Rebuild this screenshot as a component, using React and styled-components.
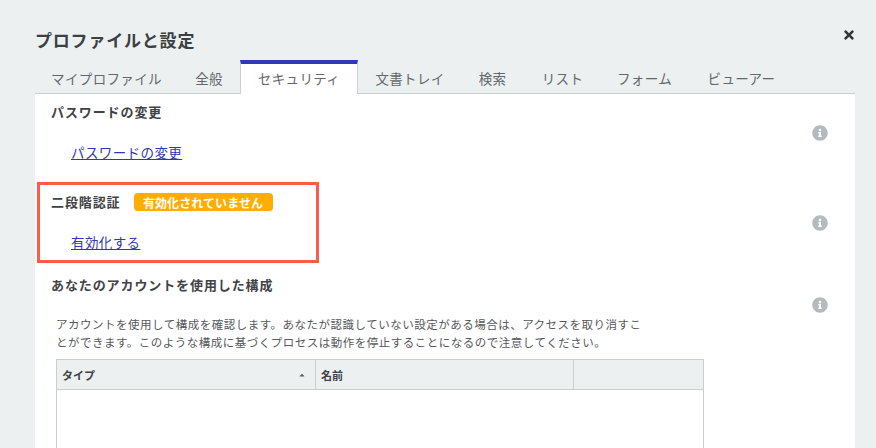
import styled, { createGlobalStyle } from "styled-components";
import { FaInfoCircle, FaTimes, FaCaretUp } from "react-icons/fa";

const Global = createGlobalStyle`
  html, body { margin: 0; padding: 0; background: #ecf0f1; overflow: hidden; }
  * { box-sizing: border-box; }
  body { font-family: "Noto Sans CJK JP", "Noto Sans", sans-serif; }
`;

const Pagina = styled.div`
  width: 876px;
  height: 448px;
  padding: 0 21px 0 35px;
  overflow: hidden;
`;

const Cabecera = styled.header`
  height: 60px;
  display: flex;
  justify-content: space-between;
  padding-top: 27px;
`;

const Titulo = styled.h1`
  margin: 0;
  font-size: 17px;
  line-height: 26px;
  font-weight: 700;
  letter-spacing: 0.8px;
  color: #3c4043;
`;

const Cerrar = styled.button`
  border: 0;
  padding: 0;
  background: none;
  width: 12px;
  height: 16px;
  color: #33383b;
  font-size: 14px;
  display: flex;
  align-items: center;
  justify-content: center;
`;

const Pestanas = styled.nav`
  height: 34px;
  display: flex;
  border-bottom: 1px solid #c9ced1;
`;

const Pestana = styled.div`
  height: ${(p) => (p.$activa ? "34px" : "33px")};
  width: ${(p) => p.$ancho}px;
  flex: none;
  display: flex;
  align-items: center;
  justify-content: center;
  padding-top: ${(p) => (p.$activa ? "0" : "2px")};
  padding-bottom: ${(p) => (p.$activa ? "2px" : "0")};
  margin-bottom: ${(p) => (p.$activa ? "-1px" : "0")};
  font-size: 13.5px;
  letter-spacing: 0.35px;
  color: #63686c;
  background: ${(p) => (p.$activa ? "#fff" : "transparent")};
  border-top: ${(p) => (p.$activa ? "4px solid #3039b3" : "none")};
  border-left: ${(p) => (p.$activa ? "1px solid #c9ced1" : "none")};
  border-right: ${(p) => (p.$activa ? "1px solid #c9ced1" : "none")};
`;

const Panel = styled.main`
  background: #fff;
  height: 360px;
  padding-top: 7px;
`;

const Seccion = styled.section`
  display: flex;
  justify-content: space-between;
  padding: 0 27px 0 16px;
`;

const Cuerpo = styled.div`
  min-width: 0;
`;

const Resaltado = styled.div`
  width: 282px;
  height: 81px;
  margin: 19px 0 0 -14px;
  border: 3px solid #ff5a4d;
  padding: 6px 0 0 11px;
`;

const FilaTitulo = styled.div`
  display: flex;
  align-items: center;
  gap: 13px;
  height: 22px;
`;

const Encabezado = styled.h2`
  margin: ${(p) => p.$arriba || 0}px 0 0;
  font-size: 13px;
  line-height: 22px;
  font-weight: 700;
  letter-spacing: 0.9px;
  color: #3f4346;
`;

const Insignia = styled.span`
  height: 18px;
  width: 139px;
  border-radius: 4px;
  background: #ffae00;
  color: #fff;
  font-size: 12px;
  font-weight: 700;
  letter-spacing: 0.1px;
  display: flex;
  align-items: center;
  justify-content: center;
`;

const Enlace = styled.a`
  display: inline-block;
  margin: 18px 0 0 20px;
  font-size: 13.5px;
  line-height: 22px;
  letter-spacing: 0.4px;
  color: #2f38ad;
  text-decoration: underline;
  cursor: pointer;
`;

const Info = styled.span`
  flex: none;
  margin-top: ${(p) => p.$arriba}px;
  height: 16px;
  color: #b4bbbf;
  font-size: 16px;
  line-height: 0;
`;

const Parrafo = styled.p`
  margin: 19px 0 8px 5px;
  width: 590px;
  font-size: 11.5px;
  line-height: 18px;
  letter-spacing: 0.5px;
  color: #55595c;
`;

const Tabla = styled.div`
  margin-left: 5px;
  width: 648px;
  height: 120px;
  border: 1px solid #c9ced1;
  border-bottom: 0;
`;

const FilaCabecera = styled.div`
  display: grid;
  grid-template-columns: 259px 258px 1fr;
  height: 30px;
  background: #ecf0f1;
  border-bottom: 1px solid #c9ced1;
`;

const Columna = styled.div`
  display: flex;
  align-items: center;
  justify-content: space-between;
  padding: 0 9px 0 5px;
  font-size: 11px;
  font-weight: 700;
  color: #3f4346;
  border-right: ${(p) => (p.$ultima ? "none" : "1px solid #c9ced1")};
`;

const Orden = styled(FaCaretUp)`
  font-size: 8px;
  color: #55595c;
`;

export default function App() {
  return (
    <>
      <Global />
      <Pagina>
        <Cabecera>
          <Titulo>プロファイルと設定</Titulo>
          <Cerrar aria-label="閉じる"><FaTimes /></Cerrar>
        </Cabecera>
        <Pestanas>
          <Pestana $ancho={143}>マイプロファイル</Pestana>
          <Pestana $ancho={62}>全般</Pestana>
          <Pestana $ancho={118} $activa>セキュリティ</Pestana>
          <Pestana $ancho={104}>文書トレイ</Pestana>
          <Pestana $ancho={61}>検索</Pestana>
          <Pestana $ancho={79}>リスト</Pestana>
          <Pestana $ancho={85}>フォーム</Pestana>
          <Pestana $ancho={109}>ビューアー</Pestana>
        </Pestanas>
        <Panel>
          <Seccion>
            <Cuerpo>
              <Encabezado>パスワードの変更</Encabezado>
              <Enlace>パスワードの変更</Enlace>
            </Cuerpo>
            <Info $arriba={24}><FaInfoCircle /></Info>
          </Seccion>
          <Seccion>
            <Resaltado>
              <FilaTitulo>
                <Encabezado>二段階認証</Encabezado>
                <Insignia>有効化されていません</Insignia>
              </FilaTitulo>
              <Enlace>有効化する</Enlace>
            </Resaltado>
            <Info $arriba={52}><FaInfoCircle /></Info>
          </Seccion>
          <Seccion>
            <Cuerpo>
              <Encabezado $arriba={11}>あなたのアカウントを使用した構成</Encabezado>
              <Parrafo>
                アカウントを使用して構成を確認します。あなたが認識していない設定がある場合は、アクセスを取り消すことができます。このような構成に基づくプロセスは動作を停止することになるので注意してください。
              </Parrafo>
              <Tabla>
                <FilaCabecera>
                  <Columna>タイプ<Orden /></Columna>
                  <Columna>名前</Columna>
                  <Columna $ultima />
                </FilaCabecera>
              </Tabla>
            </Cuerpo>
            <Info $arriba={34}><FaInfoCircle /></Info>
          </Seccion>
        </Panel>
      </Pagina>
    </>
  );
}
